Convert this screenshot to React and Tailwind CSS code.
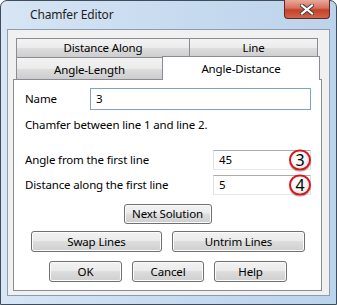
const FONT = "font-['Segoe_UI','Noto_Sans',sans-serif]";

function WinButton({ children, className = '' }) {
  return (
    <button
      className={`rounded-[3px] border border-[#707070] bg-[linear-gradient(#f2f2f2_0%,#ebebeb_45%,#dddddd_50%,#cfcfcf_100%)] text-black shadow-[inset_0_0_0_1px_#fcfcfc] ${className}`}
    >
      {children}
    </button>
  );
}

function Badge({ n }) {
  return (
    <div className="absolute -right-[1px] top-1/2 flex h-[21px] w-[22px] -translate-y-1/2 items-center justify-center rounded-full border-2 border-[#d8161e] bg-[radial-gradient(circle_at_40%_35%,#ffffff_0%,#f4f4f4_55%,#d6d6d6_100%)] pb-[1px] text-[16px] leading-none text-black shadow-[0_1px_1px_rgba(0,0,0,0.35)]">
      {n}
    </div>
  );
}

function Field({ label, value, badge }) {
  return (
    <div className="flex h-[20px] items-center">
      <span className="w-[199px] pl-[11px]">{label}</span>
      <div className="relative h-[20px] w-[98px] border border-[#abadb3] border-l-[#e2e3ea] border-r-[#dbdfe6] border-b-[#e3e9ef] bg-white pl-[5px] leading-[18px]">
        {value}
        <Badge n={badge} />
      </div>
    </div>
  );
}

function Tab({ children, className = '' }) {
  return (
    <div
      className={`flex items-center justify-center border border-b-0 border-[#898c95] bg-[linear-gradient(#f3f3f3_0%,#ebebeb_50%,#dddddd_51%,#cdcdcd_100%)] ${className}`}
    >
      {children}
    </div>
  );
}

export default function App() {
  return (
    <div className={`relative h-[305px] w-[337px] overflow-hidden ${FONT} text-[11.5px] tracking-[-0.15px] text-black`}>
      <div className="flex h-full flex-col rounded-t-[7px] border border-[#3e4c5c] bg-[linear-gradient(90deg,#d7e5f4_0%,#c9dcf0_45%,#bcd3ec_100%)]">
        {/* title bar */}
        <div className="flex h-[28px] items-center pl-[29px] text-[12px] text-[#1e1e1e]">
          Chamfer Editor
        </div>

        {/* client area */}
        <div className="mx-[6px] mb-[8px] flex-1 border border-[#8c9db2] bg-[#f0f0f0] pl-[5px] pr-[7px] pt-[8px]">
          {/* tab strip */}
          <div className="relative z-10 flex flex-col">
            <div className="flex h-[19px] pl-[3px]">
              <Tab className="w-[174px]">Distance Along</Tab>
              <Tab className="-ml-[1px] w-[129px]">Line</Tab>
            </div>
            <div className="flex h-[22px] pl-[3px]">
              <Tab className="w-[147px] pt-[2px]">Angle-Length</Tab>
              <div className="-ml-[1px] -mt-[1px] flex h-[24px] w-[158px] items-start justify-center border border-b-0 border-[#898c95] bg-white pt-[3px]">
                Angle-Distance
              </div>
            </div>
          </div>

          {/* tab panel */}
          <div className="flex h-[212px] flex-col border border-[#898c95] bg-white">
            <div className="mt-[8px] flex h-[22px] items-center">
              <span className="w-[76px] pl-[11px]">Name</span>
              <div className="h-[22px] w-[221px] border border-[#7da2ce] bg-white pl-[5px] leading-[20px]">
                3
              </div>
            </div>
            <p className="mt-[7px] pl-[11px] leading-[16px]">Chamfer between line 1 and line 2.</p>
            <div className="mt-[17px] flex flex-col gap-[5px]">
              <Field label="Angle from the first line" value="45" badge="3" />
              <Field label="Distance along the first line" value="5" badge="4" />
            </div>
            <div className="mt-[9px] flex justify-center">
              <WinButton className="h-[20px] w-[88px]">Next Solution</WinButton>
            </div>
            <div className="mt-[7px] flex justify-center gap-[10px] pl-[1px]">
              <WinButton className="h-[21px] w-[131px]">Swap Lines</WinButton>
              <WinButton className="h-[21px] w-[133px]">Untrim Lines</WinButton>
            </div>
            <div className="mt-[9px] flex justify-center gap-[10px] pl-[1px]">
              <WinButton className="h-[21px] w-[73px]">OK</WinButton>
              <WinButton className="h-[21px] w-[72px]">Cancel</WinButton>
              <WinButton className="h-[21px] w-[73px]">Help</WinButton>
            </div>
          </div>
        </div>
      </div>

      {/* close button */}
      <div className="absolute right-[7px] top-0 flex h-[19px] w-[46px] items-center justify-center rounded-b-[4px] border border-t-0 border-[#5e2a24] bg-[linear-gradient(#e9a99b_0%,#d7705c_45%,#c2412a_55%,#d5624b_100%)]">
        <svg width="14" height="11" viewBox="0 0 14 11">
          <path d="M2 1.5 L12 9.5 M12 1.5 L2 9.5" stroke="#3a3a3a" strokeWidth="4" strokeLinecap="square" />
          <path d="M2 1.5 L12 9.5 M12 1.5 L2 9.5" stroke="#ffffff" strokeWidth="2.2" strokeLinecap="square" />
        </svg>
      </div>
    </div>
  );
}
